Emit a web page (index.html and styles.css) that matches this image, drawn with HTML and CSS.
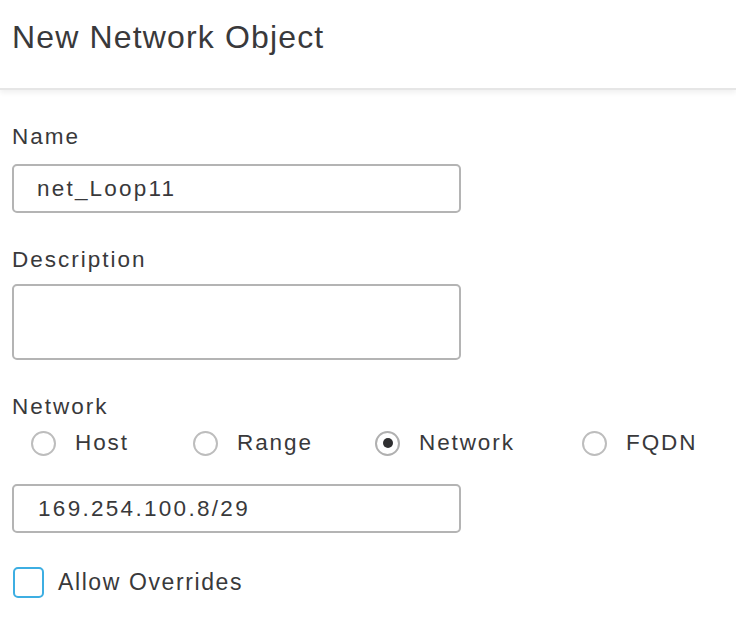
FILE: index.html
```html
<!DOCTYPE html>
<html>
<head>
<meta charset="utf-8">
<link rel="stylesheet" href="styles.css">
</head>
<body>
<div class="dialog">
  <div class="header">
    <h1 class="title">New Network Object</h1>
  </div>
  <div class="content">
    <div class="field">
      <div class="label">Name</div>
      <div class="input">net_Loop11</div>
    </div>
    <div class="field field-desc">
      <div class="label">Description</div>
      <div class="input textarea"></div>
    </div>
    <div class="field">
      <div class="label">Network</div>
      <div class="radios">
        <div class="radio r-host"><span class="circle"></span><span class="rtext">Host</span></div>
        <div class="radio r-range"><span class="circle"></span><span class="rtext">Range</span></div>
        <div class="radio r-network"><span class="circle checked"></span><span class="rtext">Network</span></div>
        <div class="radio r-fqdn"><span class="circle"></span><span class="rtext">FQDN</span></div>
      </div>
      <div class="input ip">169.254.100.8/29</div>
    </div>
    <div class="check">
      <span class="box"></span><span class="ctext">Allow Overrides</span>
    </div>
  </div>
</div>
</body>
</html>
```
FILE: styles.css
```css
html, body {
  margin: 0;
  padding: 0;
  background: #ffffff;
}
body {
  font-family: "Liberation Sans", Arial, sans-serif;
  color: #39393b;
  width: 736px;
  height: 626px;
  overflow: hidden;
}
.header {
  height: 88px;
  display: flex;
  align-items: center;
  padding-left: 12px;
  border-bottom: 2px solid #e6e6e6;
  box-shadow: 0 3px 5px rgba(0,0,0,0.06);
  position: relative;
}
.title {
  margin: 0;
  font-weight: normal;
  font-size: 32px;
  letter-spacing: 1.15px;
  color: #39393b;
  padding-bottom: 14px;
}
.content {
  padding: 0 12px;
}
.field {
  display: flex;
  flex-direction: column;
}
.label {
  font-size: 22.5px;
  letter-spacing: 2px;
  color: #39393b;
  line-height: 26px;
  margin-top: 34px;
  margin-bottom: 14px;
}
.field-desc .label {
  margin-bottom: 11px;
}
.input {
  width: 449px;
  height: 49px;
  box-sizing: border-box;
  border: 2px solid #b4b4b4;
  border-radius: 5px;
  font-size: 22.5px;
  letter-spacing: 2.2px;
  padding-left: 23px;
  display: flex;
  align-items: center;
  color: #39393b;
}
.input.ip {
  letter-spacing: 2.3px;
  padding-left: 24px;
}
.textarea {
  height: 76px;
}
.radios {
  display: flex;
  align-items: center;
  height: 30px;
  margin-top: -6px;
  margin-bottom: 26px;
  padding-left: 19px;
}
.radio {
  display: flex;
  align-items: center;
}
.circle {
  width: 25px;
  height: 25px;
  box-sizing: border-box;
  border: 2px solid #bdbdbd;
  border-radius: 50%;
  position: relative;
  flex: none;
}
.circle.checked {
  border-color: #b0b0b0;
}
.circle.checked::after {
  content: "";
  position: absolute;
  left: 5.5px;
  top: 5.5px;
  width: 10px;
  height: 10px;
  border-radius: 50%;
  background: #2f2f31;
}
.rtext {
  font-size: 22.5px;
  margin-left: 19px;
  letter-spacing: 1.9px;
}
.r-host { width: 162px; }
.r-range { width: 182px; }
.r-network { width: 207px; }
.check {
  display: flex;
  align-items: center;
  margin-top: 34px;
}
.box {
  width: 31px;
  height: 31px;
  box-sizing: border-box;
  border: 2px solid #3daee2;
  border-radius: 5px;
  margin-left: 1px;
  flex: none;
}
.ctext {
  font-size: 23px;
  margin-left: 14px;
  letter-spacing: 1.6px;
}
```
